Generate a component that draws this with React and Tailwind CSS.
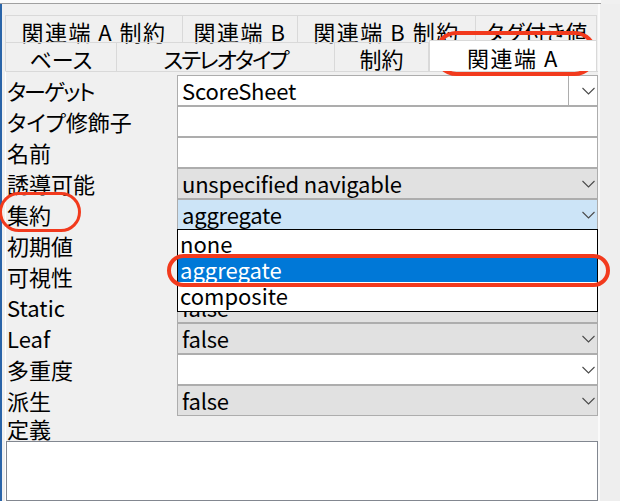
import React from 'react';

const PALT = "[font-feature-settings:'palt']";

const Chevron = () => (
    <svg width="13" height="8" viewBox="0 0 13 8" className="shrink-0">
        <polyline points="0.5,1 6.5,7 12.5,1" fill="none" stroke="#4a4a4a" strokeWidth="1.1" />
    </svg>
);

const topTabs = [
    { label: '関連端 A 制約', w: 'w-[178px]', cls: 'tracking-[1.5px]' },
    { label: '関連端 B', w: 'w-[115px]', cls: 'tracking-[1.5px]' },
    { label: '関連端 B 制約', w: 'w-[178px]', cls: 'tracking-[1.5px]' },
    { label: 'タグ付き値', w: 'w-[121px]', cls: PALT },
];

const bottomTabs = [
    { label: 'ベース', w: 'w-[112px]', cls: PALT },
    { label: 'ステレオタイプ', w: 'w-[218px]', cls: `${PALT} tracking-[-2px]` },
    { label: '制約', w: 'w-[94px]', cls: '' },
];

// kind: edit | combo | text | static | focus
const rows = [
    { label: 'ターゲット', value: 'ScoreSheet', kind: 'edit', cls: `${PALT} tracking-[-2px]` },
    { label: 'タイプ修飾子', value: '', kind: 'text', cls: PALT },
    { label: '名前', value: '', kind: 'text' },
    { label: '誘導可能', value: 'unspecified navigable', kind: 'static' },
    { label: '集約', value: 'aggregate', kind: 'focus' },
    { label: '初期値', value: '', kind: 'text' },
    { label: '可視性', value: '', kind: 'static' },
    { label: 'Static', value: 'false', kind: 'static' },
    { label: 'Leaf', value: 'false', kind: 'static' },
    { label: '多重度', value: '', kind: 'combo' },
    { label: '派生', value: 'false', kind: 'static' },
];

const fieldBg = {
    edit: 'bg-white',
    text: 'bg-white',
    combo: 'bg-white',
    static: 'bg-[#e1e1e1]',
    focus: 'bg-[#cce4f7]',
};

const Field = ({ row }) => (
    <div className={`flex h-[31px] w-[421px] items-center border border-[#adadad] ${fieldBg[row.kind]}`}>
        <span className="flex-1 whitespace-nowrap pl-[4px] leading-[29px] tracking-[-0.2px]">{row.value}</span>
        {row.kind === 'edit' && (
            <div className="flex h-full w-[29px] items-center justify-end border-l border-[#adadad] pr-[2px]">
                <Chevron />
            </div>
        )}
        {(row.kind === 'static' || row.kind === 'focus' || row.kind === 'combo') && (
            <div className="pr-[2px]">
                <Chevron />
            </div>
        )}
    </div>
);

const App = () => {
    return (
        <div className="relative h-[501px] w-[620px] overflow-hidden bg-[#f0f0f0] font-['Noto_Sans_CJK_JP','Noto_Sans',sans-serif] text-[22px] text-black">
            {/* window top edge */}
            <div className="mr-[19px] h-[4px] border-b border-[#a0a0a0] bg-[#fafafa]" />

            <div className="flex h-[497px]">
                <div className="w-[2px] bg-[#2a64a8]" />
                <div className="w-[3px]" />

                <div className="flex w-[593px] flex-col">
                    <div className="h-[11px]" />

                    {/* Tab row 1 */}
                    <div className="flex h-[27px]">
                        {topTabs.map((t, i) => (
                            <div
                                key={t.label}
                                className={`${t.w} flex items-center justify-center whitespace-nowrap border-r border-t border-[#d9d9d9] leading-[22px] ${i === 0 ? 'border-l' : ''}`}
                            >
                                <span className={`mt-[3px] ${t.cls}`}>{t.label}</span>
                            </div>
                        ))}
                    </div>

                    {/* Tab row 2 */}
                    <div className="flex h-[29px]">
                        {bottomTabs.map((t, i) => (
                            <div
                                key={t.label}
                                className={`${t.w} flex items-center justify-center whitespace-nowrap border-r border-t border-[#d9d9d9] leading-[24px] ${i === 0 ? 'border-l' : ''}`}
                            >
                                <span className={`mt-[2px] ${t.cls}`}>{t.label}</span>
                            </div>
                        ))}
                        <div className="relative z-10 -mt-[2px] flex h-[31px] w-[168px] items-center justify-center border-x border-t border-[#d9d9d9] bg-white leading-[24px]">
                            <span className="mt-[1px] tracking-[1.5px]">関連端 A</span>
                        </div>
                    </div>

                    {/* Page */}
                    <div className="flex flex-1 flex-col border-l border-t border-l-white border-t-[#d9d9d9] pt-[3px]">
                        {rows.map((row) => (
                            <div key={row.label} className="flex h-[31px] items-center">
                                <div className="w-[171px] pl-[1px] leading-[31px]">
                                    <span className={row.cls}>{row.label}</span>
                                </div>
                                <Field row={row} />
                            </div>
                        ))}
                        <div className="h-[25px] pl-[1px] leading-[25px]">定義</div>
                        <div className="flex-1 border border-[#828790] bg-white" />
                    </div>
                </div>

                <div className="w-[22px] border-l-2 border-[#fafafa] bg-[#eeeeee]" />
            </div>

            {/* open dropdown list */}
            <div className="absolute left-[177px] top-[229px] h-[83px] w-[421px] border border-black bg-white">
                <div className="h-[26px] pl-[2px] leading-[26px]">none</div>
                <div className="h-[26px] bg-[#0078d7] pl-[2px] leading-[26px] text-white">aggregate</div>
                <div className="h-[26px] pl-[2px] leading-[26px]">composite</div>
            </div>

            {/* red annotations */}
            <div className="absolute left-[434px] top-[31px] h-[45px] w-[163px] rounded-full border-[4px] border-[#f23a1d]" />
            <div className="absolute left-[-1px] top-[192px] h-[40px] w-[82px] rounded-full border-[3px] border-[#f23a1d]" />
            <div className="absolute left-[167px] top-[254px] h-[33px] w-[443px] rounded-full border-[4px] border-[#f23a1d]" />
        </div>
    );
};

export default App;
